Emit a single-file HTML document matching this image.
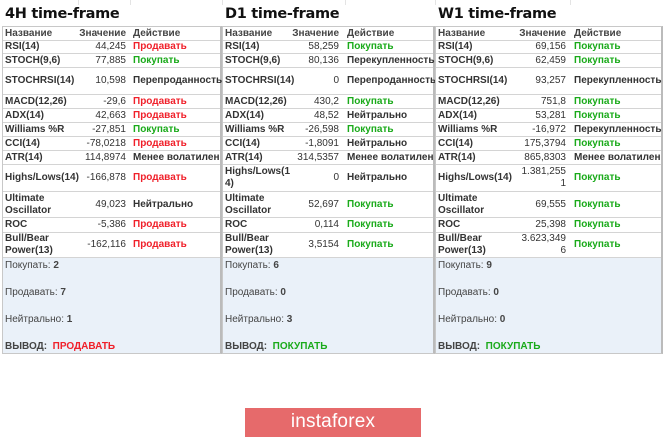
<!DOCTYPE html>
<html><head><meta charset="utf-8"><style>
*{margin:0;padding:0;box-sizing:border-box}
body{width:665px;height:439px;background:#fff;font-family:"Liberation Sans",Arial,sans-serif;position:relative;overflow:hidden;color:#333}
.t{position:absolute;top:6px;font-weight:bold;font-size:14.5px;color:#111;font-family:"DejaVu Sans","Liberation Sans",sans-serif;letter-spacing:-0.3px}
.tb{position:absolute;top:26px;border:1px solid #c8c8c8;border-right:2px solid #bbb}
.r{position:relative;border-bottom:1px solid #d4d4d4;font-size:10px;background:#fff}
.r div{position:absolute;top:50%;transform:translateY(-50%);line-height:12px;white-space:nowrap}
.n{font-weight:bold;color:#333}
.v{text-align:right;color:#333}
.a{font-weight:bold;color:#333}
.h .n,.h .v,.h .a{font-weight:bold;color:#444}
.red{color:#f0202a}.grn{color:#1aaa1a}
.s{background:#eaf1f9;height:95px;font-size:10px;color:#444;position:relative}
.s div{position:absolute}
.btn{position:absolute;left:245px;top:408px;width:176px;height:29px;background:#e66a6b;color:#fff;font-size:19px;text-align:center;line-height:28px;letter-spacing:0.2px}
.gl{position:absolute;top:0;width:1px;height:5px;background:#e4e4e4}
</style></head><body>
<div class="gl" style="left:78px"></div><div class="gl" style="left:130px"></div><div class="gl" style="left:222px"></div><div class="gl" style="left:345px"></div><div class="gl" style="left:435px"></div><div class="gl" style="left:570px"></div>
<div id="c"></div>
<div class="btn">instaforex</div>
<script>
const H=[14,13,14,27,14,14,14,14,14,27,26,15,25];
const names=["Название","RSI(14)","STOCH(9,6)","STOCHRSI(14)","MACD(12,26)","ADX(14)","Williams %R","CCI(14)","ATR(14)","Highs/Lows(14)","Ultimate<br>Oscillator","ROC","Bull/Bear<br>Power(13)"];
const P=[
{x:2,w:220,vr:126,ax:130,title:"4H time-frame",
vals:["44,245","77,885","10,598","-29,6","42,663","-27,851","-78,0218","114,8974","-166,878","49,023","-5,386","-162,116"],
acts:["r","g","Перепроданность","r","r","g","r","Менее волатилен","r","Нейтрально","r","r"],
sum:["2","7","1"],res:"ПРОДАВАТЬ",rc:"red"},
{x:222,w:213,vr:119,ax:124,title:"D1 time-frame",names9:"Highs/Lows(1<br>4)",
vals:["58,259","80,136","0","430,2","48,52","-26,598","-1,8091","314,5357","0","52,697","0,114","3,5154"],
acts:["g","Перекупленность","Перепроданность","g","Нейтрально","g","Нейтрально","Менее волатилен","Нейтрально","g","g","g"],
sum:["6","0","3"],res:"ПОКУПАТЬ",rc:"grn"},
{x:435,w:228,vr:133,ax:138,title:"W1 time-frame",
vals:["69,156","62,459","93,257","751,8","53,281","-16,972","175,3794","865,8303","1.381,255<br>1","69,555","25,398","3.623,349<br>6"],
acts:["g","g","Перекупленность","g","g","Перекупленность","g","Менее волатилен","g","g","g","g"],
sum:["9","0","0"],res:"ПОКУПАТЬ",rc:"grn"}];
let h="";
for(const p of P){
h+=`<div class="t" style="left:${p.x+3}px">${p.title}</div><div class="tb" style="left:${p.x}px;width:${p.w}px">`;
for(let i=0;i<13;i++){
let nm=names[i];if(i==9&&p.names9)nm=p.names9;
let v=i==0?"Значение":p.vals[i-1];
let a=i==0?"Действие":p.acts[i-1],cls="";
if(a=="r"){a="Продавать";cls="red"}else if(a=="g"){a="Покупать";cls="grn"}
h+=`<div class="r${i==0?' h':''}" style="height:${H[i]}px"><div class="n" style="left:2px">${nm}</div><div class="v" style="right:${p.w-p.vr}px">${v}</div><div class="a ${cls}" style="left:${p.ax}px">${a}</div></div>`;
}
h+=`<div class="s"><div style="left:2px;top:2px">Покупать: <b>${p.sum[0]}</b></div><div style="left:2px;top:29px">Продавать: <b>${p.sum[1]}</b></div><div style="left:2px;top:56px">Нейтрально: <b>${p.sum[2]}</b></div><div style="left:2px;top:83px;font-weight:bold">ВЫВОД: &nbsp;<span class="${p.rc}">${p.res}</span></div></div></div>`;
}
document.getElementById("c").innerHTML=h;
</script>
</body></html>
